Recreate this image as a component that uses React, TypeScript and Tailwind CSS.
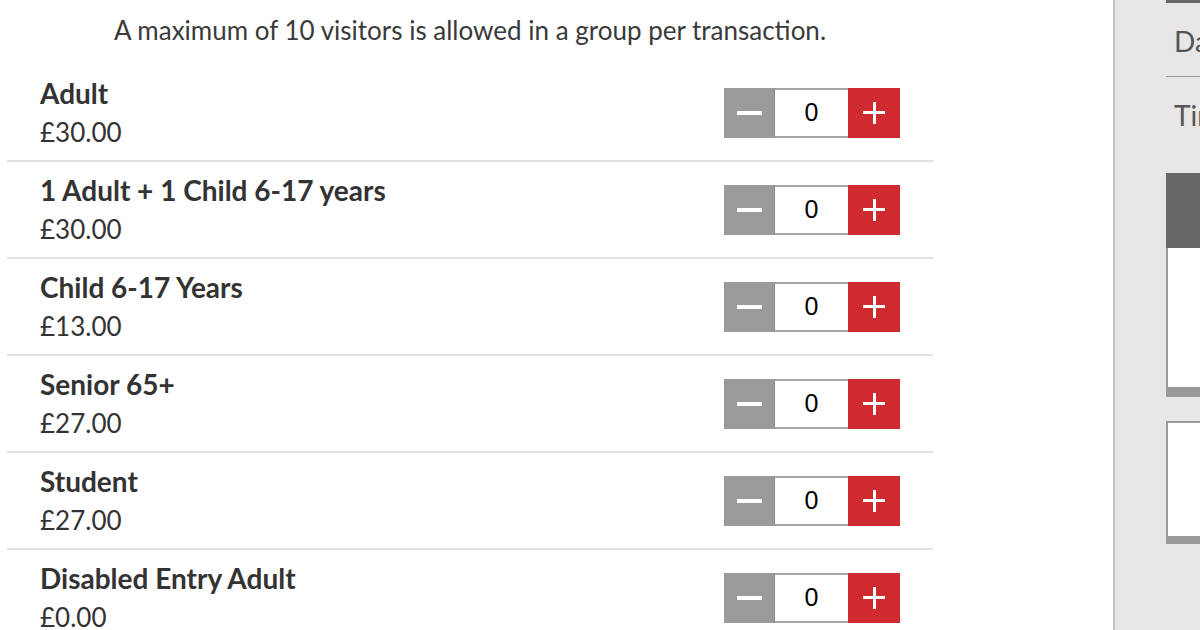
import React from "react";

const rows = [
  { name: "Adult", price: "£30.00" },
  { name: "1 Adult + 1 Child 6-17 years", price: "£30.00" },
  { name: "Child 6-17 Years", price: "£13.00" },
  { name: "Senior 65+", price: "£27.00" },
  { name: "Student", price: "£27.00" },
  { name: "Disabled Entry Adult", price: "£0.00" },
];

function Stepper() {
  return (
    <div className="flex h-[50px] items-stretch">
      <button className="flex w-[50px] items-center justify-center bg-[#9b9b9b]">
        <span className="block h-[4px] w-[25px] bg-white" />
      </button>
      <div className="flex w-[74px] items-center justify-center border-y-2 border-l border-y-[#a5a5a5] border-l-[#8a8a8a] bg-white text-[25px] text-black [font-family:'Liberation_Sans',Arial,sans-serif]">
        0
      </div>
      <button className="relative flex w-[52px] items-center justify-center bg-[#cf2a2f]">
        <span className="absolute h-[3px] w-[22px] bg-white" />
        <span className="absolute h-[22px] w-[3px] bg-white" />
      </button>
    </div>
  );
}

export default function App() {
  return (
    <div className="flex h-[630px] w-[1200px] overflow-hidden bg-white text-[#333] [font-family:Lato,'Liberation_Sans',sans-serif]">
      <div className="w-[1113px] shrink-0 pl-[7px]">
        <div className="w-[926px]">
          <div className="mb-[5px] flex h-[60px] items-center justify-center text-[26px] text-[#3a3a3a]">
            A maximum of 10 visitors is allowed in a group per transaction.
          </div>
          {rows.map((r) => (
            <div
              key={r.name}
              className="flex h-[97px] items-center justify-between border-b-2 border-[#e2e2e2] px-[33px]"
            >
              <div>
                <div className="text-[28px] font-bold leading-[39px]">{r.name}</div>
                <div className="text-[26px] leading-[39px]">{r.price}</div>
              </div>
              <Stepper />
            </div>
          ))}
        </div>
      </div>
      <div className="flex-1 border-l-2 border-[#c4c4c4] bg-[#e8e6e7] pl-[51px]">
        <div className="w-[300px]">
          <div className="h-[3px] bg-[#666]" />
          <div className="flex h-[74px] items-center border-b border-[#9a9a9a] pl-[8px] pt-[2px] text-[28px] text-[#555]">
            Date
          </div>
          <div className="flex h-[76px] items-center pl-[8px] text-[28px] text-[#555]">
            Time
          </div>
          <div className="mt-[20px] h-[75px] bg-[#676767]" />
          <div className="h-[149px] border-b-[10px] border-l-2 border-[#999] bg-white" />
          <div className="mt-[24px] h-[123px] border-b-[8px] border-l-2 border-t-2 border-[#999] bg-white" />
        </div>
      </div>
    </div>
  );
}
